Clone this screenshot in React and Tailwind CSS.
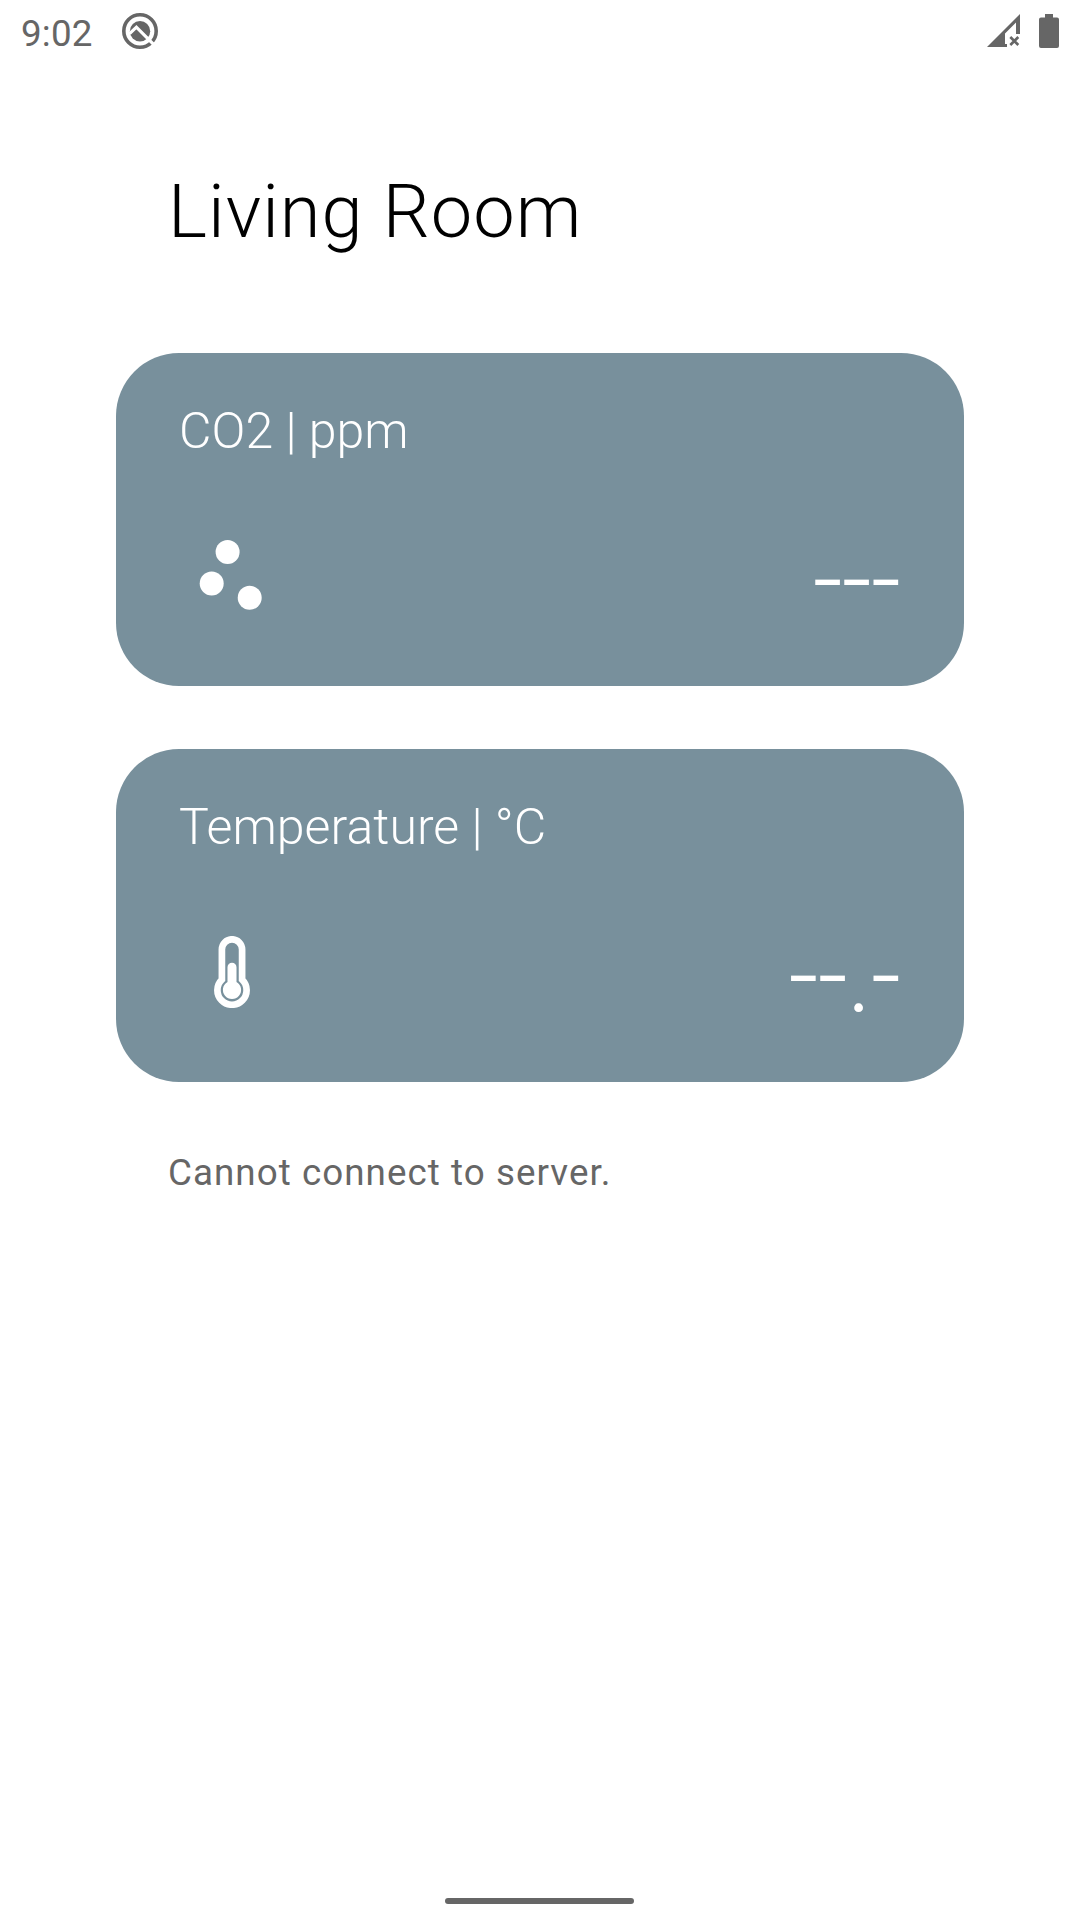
function AndroidQIcon() {
  return (
    <svg className="h-9 w-9" viewBox="0 0 36 36">
      <circle cx="18" cy="18" r="16.2" fill="none" stroke="#666666" strokeWidth="3.6" />
      <circle cx="18" cy="18.2" r="10.2" fill="#666666" />
      <path d="M7.6 20.6L14.4 14.2L32.6 32.4" fill="none" stroke="#ffffff" strokeWidth="3.2" />
    </svg>
  );
}

function SignalIcon() {
  return (
    <svg className="h-[33px] w-[33px]" viewBox="0 0 33 33" fill="#666666">
      <path d="M0 33L33 0V20H29V8.5L18 19.5V30H20V33Z" />
      <path d="M23.3 23L31.3 31M31.3 23L23.3 31" stroke="#666666" strokeWidth="2.6" />
    </svg>
  );
}

function BatteryIcon() {
  return (
    <svg className="h-[34px] w-5" viewBox="0 0 20 34" fill="#666666">
      <path d="M6 0H14V3.5H18Q20 3.5 20 5.5V32Q20 34 18 34H2Q0 34 0 32V5.5Q0 3.5 2 3.5H6Z" />
    </svg>
  );
}

function ParticlesIcon() {
  return (
    <svg className="h-[70px] w-[64px]" viewBox="0 0 64 70" fill="#ffffff">
      <circle cx="28.6" cy="12" r="12" />
      <circle cx="12.7" cy="43.5" r="12" />
      <circle cx="50.7" cy="57.8" r="12" />
    </svg>
  );
}

function ThermometerIcon() {
  return (
    <svg className="ml-[14.5px] h-[72px] w-9" viewBox="0 0 36 72" fill="none">
      <path
        d="M7.9 43.6V13.4A10.1 10.1 0 0 1 28.1 13.4V43.6A14.6 14.6 0 1 1 7.9 43.6Z"
        stroke="#ffffff"
        strokeWidth="6.7"
      />
      <path d="M13.5 45.9V31.2A4.5 4.5 0 0 1 22.5 31.2V45.9A9.1 9.1 0 1 1 13.5 45.9Z" fill="#ffffff" />
    </svg>
  );
}

function SensorCard({ label, icon, value }) {
  return (
    <section className="flex h-[333px] w-full flex-col rounded-[63px] bg-[#78909c] px-[63px] text-white">
      <h2 className="mt-[48px] text-[50px] leading-[60px] font-light tracking-[0.05px] whitespace-pre">{label}</h2>
      <div className="mt-[79px] flex h-[72px] items-start justify-between pl-5">
        {icon}
        <span className="-mt-[9px] mr-px text-[105px] leading-[100px] font-light tracking-[-1px]">{value}</span>
      </div>
    </section>
  );
}

export default function App() {
  return (
    <div className="flex h-[1920px] w-[1080px] flex-col overflow-hidden bg-white font-['Roboto',sans-serif]">
      <header className="flex h-[63px] items-start justify-between pr-[21px] pl-[21px] text-[#666666]">
        <div className="flex items-start">
          <span className="mt-[12px] w-[101px] text-[36.75px] leading-[43px] tracking-[0.2px]">9:02</span>
          <div className="mt-[13px]"><AndroidQIcon /></div>
        </div>
        <div className="mt-[14px] flex items-start gap-[19px]">
          <SignalIcon />
          <BatteryIcon />
        </div>
      </header>
      <main className="flex grow flex-col px-[116px]">
        <h1 className="mt-[105px] pl-[52px] text-[74px] leading-[88px] font-light tracking-[1px] text-black">Living Room</h1>
        <div className="mt-[97px] flex flex-col gap-[63px]">
          <SensorCard label="CO2 | ppm" icon={<ParticlesIcon />} value="---" />
          <SensorCard label="Temperature | °C" icon={<ThermometerIcon />} value="--.-" />
        </div>
        <p className="mt-[69px] pl-[52px] text-[36.75px] leading-[44px] tracking-[1.05px] text-[#666666]">
          Cannot connect to server.
        </p>
      </main>
      <div className="mb-4 ml-[445px] h-[6px] w-[189px] rounded-full bg-[#666666]" />
    </div>
  );
}
